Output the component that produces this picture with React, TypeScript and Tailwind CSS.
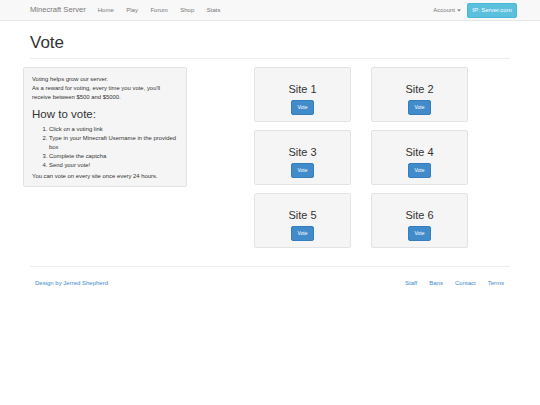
import React from "react";

const font = { fontFamily: '"Liberation Sans", Arial, Helvetica, sans-serif' };

function SiteCard({ n }: { n: number }) {
  return (
    <div className="w-[97px] h-[55px] bg-[#f5f5f5] border border-[#e3e3e3] rounded-[2px] flex flex-col items-center pt-[15px]">
      <div className="text-[11px] leading-[13px] text-[#333]">Site {n}</div>
      <button className="mt-[4px] h-[15px] w-[23px] bg-[#428bca] border border-[#357ebd] rounded-[2px] text-white text-[5px] leading-none">
        Vote
      </button>
    </div>
  );
}

export default function App() {
  return (
    <div style={font} className="w-[540px] h-[405px] bg-white text-[#333] overflow-hidden">
      <nav className="h-[21px] bg-[#f8f8f8] border-b border-[#e7e7e7] flex items-center">
        <div className="ml-[30px] text-[7.6px] text-[#777]">Minecraft Server</div>
        <div className="ml-[12px] flex gap-[12.5px] text-[6px] text-[#777]">
          <span>Home</span>
          <span>Play</span>
          <span>Forum</span>
          <span>Shop</span>
          <span>Stats</span>
        </div>
        <div className="ml-auto mr-[6px] text-[6px] text-[#777] flex items-center">
          Account
          <svg width="4" height="3" viewBox="0 0 4 3" className="ml-[2px]">
            <path d="M0 0.5 H4 L2 2.5 Z" fill="#777" />
          </svg>
        </div>
        <div className="mr-[23px] h-[15px] w-[50px] bg-[#5bc0de] border border-[#46b8da] rounded-[2px] text-white text-[6px] flex items-center justify-center">
          IP: Server.com
        </div>
      </nav>

      <div className="mx-[30px]">
        <h1 className="text-[17px] leading-[20px] mt-[12px] text-[#333]">Vote</h1>
        <div className="mt-[5px] border-t border-[#eee]" />
      </div>

      <div className="flex mt-[8px]">
        <div className="ml-[23px] w-[164px] h-[120px] bg-[#f5f5f5] border border-[#e3e3e3] rounded-[2px] px-[8px] pt-[7px] text-[5.9px] leading-[9px] text-[#333]">
          <p>Voting helps grow our server.</p>
          <p>As a reward for voting, every time you vote, you'll receive between $500 and $5000.</p>
          <h3 className="text-[11.5px] leading-[13px] mt-[6px] mb-[4px]">How to vote:</h3>
          <ol className="list-decimal pl-[17px]">
            <li>Click on a voting link</li>
            <li>Type in your Minecraft Username in the provided box</li>
            <li>Complete the captcha</li>
            <li>Send your vote!</li>
          </ol>
          <p className="mt-[2px]">You can vote on every site once every 24 hours.</p>
        </div>

        <div className="ml-[67px] grid grid-cols-[97px_97px] gap-x-[20px] gap-y-[8px]">
          {[1, 2, 3, 4, 5, 6].map((n) => (
            <SiteCard key={n} n={n} />
          ))}
        </div>
      </div>

      <div className="mx-[30px] mt-[18px] border-t border-[#eee]" />
      <div className="mx-[35px] mt-[12px] flex items-center text-[6px] text-[#428bca]">
        <span>Design by Jerred Shepherd</span>
        <div className="ml-auto mr-[1px] flex gap-[12px]">
          <span>Staff</span>
          <span>Bans</span>
          <span>Contact</span>
          <span>Terms</span>
        </div>
      </div>
    </div>
  );
}
